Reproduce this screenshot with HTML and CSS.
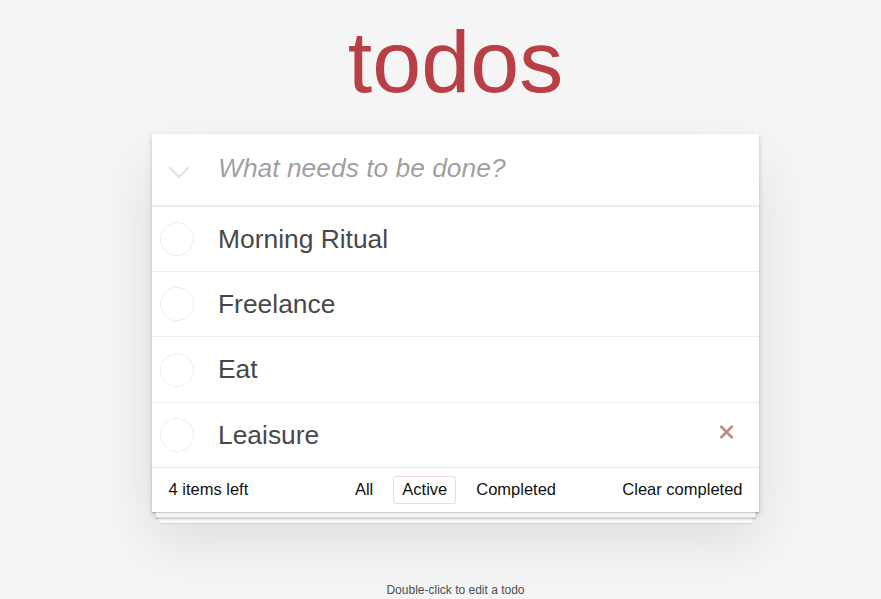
FILE: index.html
```html
<!doctype html>
<html lang="en">
<head>
<meta charset="utf-8">
<title>todos</title>
<link rel="stylesheet" href="styles.css">
</head>
<body>
<div class="page">
  <section class="todoapp">
    <h1 class="title">todos</h1>
    <div class="card">
      <header class="header">
        <span class="toggle-all">
          <svg width="22" height="13" viewBox="0 0 22 13"><polyline points="2,2 11,11 20,2" fill="none" stroke="#e6e6e6" stroke-width="2.6" stroke-linecap="round" stroke-linejoin="round"/></svg>
        </span>
        <input class="new-todo" placeholder="What needs to be done?">
      </header>
      <ul class="todo-list">
        <li class="todo"><span class="toggle"></span><label class="todo-label">Morning Ritual</label></li>
        <li class="todo"><span class="toggle"></span><label class="todo-label">Freelance</label></li>
        <li class="todo"><span class="toggle"></span><label class="todo-label">Eat</label></li>
        <li class="todo"><span class="toggle"></span><label class="todo-label">Leaisure</label>
          <button class="destroy" aria-label="Delete"><svg width="15" height="14" viewBox="0 0 15 14"><path d="M1.5 1 L13.5 13 M13.5 1 L1.5 13" stroke="#c48888" stroke-width="2.6" fill="none"/></svg></button>
        </li>
      </ul>
      <footer class="footer">
        <span class="todo-count">4 items left</span>
        <ul class="filters">
          <li><a class="filter">All</a></li>
          <li><a class="filter selected">Active</a></li>
          <li><a class="filter">Completed</a></li>
        </ul>
        <button class="clear-completed">Clear completed</button>
      </footer>
    </div>
  </section>
  <p class="info">Double-click to edit a todo</p>
</div>
</body>
</html>
```
FILE: styles.css
```css
* { box-sizing: border-box; }

body {
  margin: 0;
  background: #f5f5f5;
  font-family: "Liberation Sans", Arial, sans-serif;
  color: #111;
}

.page {
  width: 607px;
  margin-left: 152px;
}

.title {
  margin: 17.5px 0 28.5px;
  font-size: 88px;
  line-height: 88px;
  font-weight: 400;
  text-align: center;
  color: #b83f45;
}

.card {
  background: #fff;
  box-shadow: 0 2.2px 4.4px 0 rgba(0, 0, 0, 0.2), 0 27.5px 55px 0 rgba(0, 0, 0, 0.1);
}

.header {
  display: flex;
  height: 72px;
  box-shadow: inset 0 -2px 1px rgba(0, 0, 0, 0.03);
}

.toggle-all {
  width: 66px;
  flex: none;
  display: flex;
  align-items: center;
  padding-left: 16px;
  padding-top: 5px;
}

.new-todo {
  flex: 1;
  min-width: 0;
  border: none;
  outline: none;
  background: transparent;
  height: 72px;
  padding: 11px 16px 15px 0;
  font-family: inherit;
  font-size: 26.4px;
  color: #484848;
}

.new-todo::placeholder {
  font-style: italic;
  color: rgba(0, 0, 0, 0.4);
}

.todo-list {
  list-style: none;
  margin: 0;
  padding: 0;
  border-top: 1px solid #e6e6e6;
}

.todo {
  display: flex;
  align-items: center;
  border-bottom: 1px solid #ededed;
}

.todo:last-child { border-bottom: none; }

.toggle {
  flex: none;
  width: 34px;
  height: 34px;
  margin-left: 8px;
  border: 1px solid #ededed;
  border-radius: 50%;
}

.todo-label {
  flex: 1;
  padding: 15.9px 0 16.35px 24px;
  font-size: 26.4px;
  line-height: 32px;
  color: #484848;
}

.destroy {
  flex: none;
  width: 44px;
  height: 44px;
  margin-right: 11px;
  padding: 0 0 5px;
  border: none;
  background: none;
  display: flex;
  align-items: center;
  justify-content: center;
}

.footer {
  display: grid;
  grid-template-columns: 1fr auto 1fr;
  align-items: center;
  height: 45px;
  padding: 0 16.5px;
  border-top: 1px solid #e6e6e6;
  font-size: 16.5px;
  color: #111;
  box-shadow: 0 1.1px 1.1px rgba(0, 0, 0, 0.2),
              0 8.8px 0 -3.3px #f6f6f6,
              0 9.9px 1.1px -3.3px rgba(0, 0, 0, 0.2),
              0 17.6px 0 -6.6px #f6f6f6,
              0 18.7px 2.2px -6.6px rgba(0, 0, 0, 0.2);
}

.todo-count { justify-self: start; }

.filters {
  display: flex;
  gap: 11px;
  list-style: none;
  margin: 0;
  padding: 0;
}

.filter {
  display: block;
  padding: 3.3px 8px;
  border: 1px solid transparent;
  border-radius: 3px;
  color: inherit;
}

.filter.selected { border-color: rgba(184, 63, 69, 0.2); }

.clear-completed {
  justify-self: end;
  padding: 0;
  border: none;
  background: none;
  font-family: inherit;
  font-size: 16.5px;
  color: #111;
}

.info {
  margin: 72px 0 0;
  font-size: 12px;
  line-height: 12px;
  text-align: center;
  color: #4d4d4d;
}
```
